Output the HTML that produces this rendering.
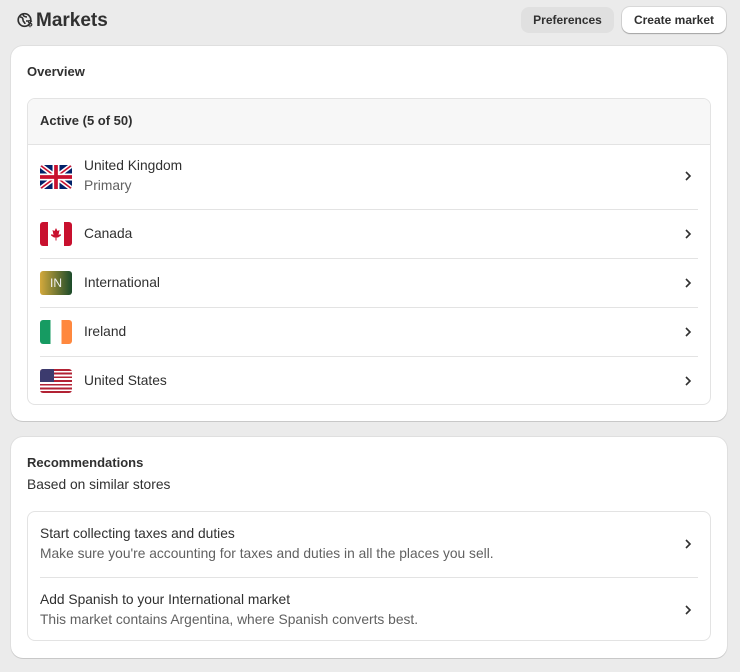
<!DOCTYPE html><html><head><style>
*{box-sizing:border-box;margin:0;padding:0}
body{width:740px;height:672px;background:#ebebeb;font-family:"Liberation Sans",sans-serif;color:#303030;font-size:13px;position:relative;overflow:hidden}
.abs{position:absolute}
.card{position:absolute;left:11px;width:716px;background:#fff;border-radius:12px;box-shadow:0 1px 0 rgba(0,0,0,.1),0 0 0 1px rgba(0,0,0,.05)}
.box{position:absolute;left:16px;width:684px;border:1px solid #e3e3e3;border-radius:8px;overflow:hidden}
.row{position:relative;margin:0 12px;border-top:1px solid #e3e3e3;font-size:13.8px}
.row.f{border-top:none}
.flag{position:absolute;left:0;width:32px;height:24px;border-radius:3px;overflow:hidden}
.lbl{position:absolute;left:44px}
.chev{position:absolute;right:6px;width:8px;height:12px}
.sub{color:#616161}
</style></head><body>
<svg class="abs" style="left:17px;top:12px" width="17" height="16" viewBox="0 0 17 16"><circle cx="7.5" cy="8" r="6.3" fill="none" stroke="#303030" stroke-width="1.7"/><path d="M3 5c2 0 3 1 3 3s2 2 2 4M6 2c0 2 2 3 4 3M9 9h3" stroke="#303030" stroke-width="1.6" fill="none"/><text x="10.5" y="14.5" font-size="9" font-weight="bold" font-family="Liberation Sans" fill="#303030">$</text></svg>
<div class="abs" style="left:36px;top:10px;font-size:19px;font-weight:bold;color:#303030">Markets</div>
<div class="abs" style="left:521px;top:7px;width:93px;height:26px;background:#e0e0e0;border-radius:8px;font-size:12px;font-weight:bold;line-height:26px;text-align:center;color:#303030">Preferences</div>
<div class="abs" style="left:622px;top:7px;width:104px;height:26px;background:#fff;border-radius:8px;font-size:12px;font-weight:bold;line-height:26px;text-align:center;box-shadow:0 1px 1px rgba(0,0,0,.25),0 0 0 1px rgba(0,0,0,.08)">Create market</div>

<div class="card" style="top:46px;height:375px">
<div class="abs" style="left:16px;top:18px;font-weight:bold">Overview</div>
<div class="box" style="top:52px;height:307px">
<div style="height:46px;background:#f7f7f7;border-bottom:1px solid #e3e3e3;padding:14px 12px;font-weight:bold">Active (5 of 50)</div>
<div class="row f" style="height:64px">
<svg class="flag" style="top:20px" viewBox="0 0 60 45" preserveAspectRatio="none"><rect width="60" height="45" fill="#012169"/><path d="M0 0L60 45M60 0L0 45" stroke="#fff" stroke-width="9"/><path d="M0 0L60 45M60 0L0 45" stroke="#c8102e" stroke-width="3"/><path d="M30 0v45M0 22.5h60" stroke="#fff" stroke-width="13"/><path d="M30 0v45M0 22.5h60" stroke="#c8102e" stroke-width="7"/></svg>
<div class="lbl" style="top:13px">United Kingdom</div><div class="lbl sub" style="top:33px">Primary</div>
<svg class="chev" style="top:25px" viewBox="0 0 8 12"><path d="M2 2l4 4-4 4" stroke="#303030" stroke-width="1.6" fill="none"/></svg></div>
<div class="row" style="height:49px">
<svg class="flag" style="top:12px" viewBox="0 0 32 24"><rect width="32" height="24" fill="#fff"/><rect width="8" height="24" fill="#c8102e"/><rect x="24" width="8" height="24" fill="#c8102e"/><path d="M16 6l1.5 3 2-1-1 5 2-1 .5 1.5-3 2h-1.5v3h-1v-3H14l-3-2 .5-1.5 2 1-1-5 2 1z" fill="#c8102e"/></svg>
<div class="lbl" style="top:16px">Canada</div>
<svg class="chev" style="top:18px" viewBox="0 0 8 12"><path d="M2 2l4 4-4 4" stroke="#303030" stroke-width="1.6" fill="none"/></svg></div>
<div class="row" style="height:49px">
<div class="flag" style="top:12px;background:linear-gradient(90deg,#d4a93c,#1a4a2a);color:#f0f0f0;font-size:12px;line-height:24px;text-align:center">IN</div>
<div class="lbl" style="top:16px">International</div>
<svg class="chev" style="top:18px" viewBox="0 0 8 12"><path d="M2 2l4 4-4 4" stroke="#303030" stroke-width="1.6" fill="none"/></svg></div>
<div class="row" style="height:49px">
<div class="flag" style="top:12px;background:linear-gradient(90deg,#169b62 33%,#fff 33%,#fff 67%,#ff883e 67%)"></div>
<div class="lbl" style="top:16px">Ireland</div>
<svg class="chev" style="top:18px" viewBox="0 0 8 12"><path d="M2 2l4 4-4 4" stroke="#303030" stroke-width="1.6" fill="none"/></svg></div>
<div class="row" style="height:49px">
<div class="flag" style="top:12px;background:repeating-linear-gradient(180deg,#b22234 0 1.85px,#fff 1.85px 3.7px)"><div style="width:14px;height:13px;background:#3c3b6e"></div></div>
<div class="lbl" style="top:16px">United States</div>
<svg class="chev" style="top:18px" viewBox="0 0 8 12"><path d="M2 2l4 4-4 4" stroke="#303030" stroke-width="1.6" fill="none"/></svg></div>
</div></div>

<div class="card" style="top:437px;height:221px">
<div class="abs" style="left:16px;top:18px;font-weight:bold">Recommendations</div>
<div class="abs" style="left:16px;top:40px;font-size:13.8px">Based on similar stores</div>
<div class="box" style="top:74px;height:130px">
<div class="row f" style="height:65px"><div class="abs" style="left:0;top:14px">Start collecting taxes and duties</div><div class="abs sub" style="left:0;top:34px">Make sure you're accounting for taxes and duties in all the places you sell.</div>
<svg class="chev" style="top:26px" viewBox="0 0 8 12"><path d="M2 2l4 4-4 4" stroke="#303030" stroke-width="1.6" fill="none"/></svg></div>
<div class="row" style="height:64px"><div class="abs" style="left:0;top:14px">Add Spanish to your International market</div><div class="abs sub" style="left:0;top:34px">This market contains Argentina, where Spanish converts best.</div>
<svg class="chev" style="top:26px" viewBox="0 0 8 12"><path d="M2 2l4 4-4 4" stroke="#303030" stroke-width="1.6" fill="none"/></svg></div>
</div></div>
</body></html>
